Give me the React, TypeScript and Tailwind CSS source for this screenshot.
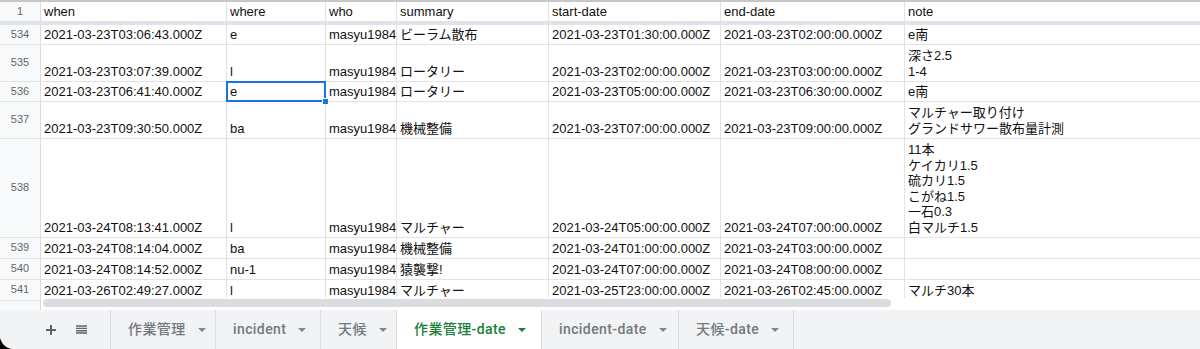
import { Fragment } from 'react';

interface Row {
  num: number;
  height: string;
  when: string;
  where: string;
  summary: string;
  start: string;
  end: string;
  note: string[];
}

const ROWS: Row[] = [
  { num: 534, height: 'h-[20px]', when: '2021-03-23T03:06:43.000Z', where: 'e', summary: 'ビーラム散布', start: '2021-03-23T01:30:00.000Z', end: '2021-03-23T02:00:00.000Z', note: ['e南'] },
  { num: 535, height: 'h-[37px]', when: '2021-03-23T03:07:39.000Z', where: 'l', summary: 'ロータリー', start: '2021-03-23T02:00:00.000Z', end: '2021-03-23T03:00:00.000Z', note: ['深さ2.5', '1-4'] },
  { num: 536, height: 'h-[20px]', when: '2021-03-23T06:41:40.000Z', where: 'e', summary: 'ロータリー', start: '2021-03-23T05:00:00.000Z', end: '2021-03-23T06:30:00.000Z', note: ['e南'] },
  { num: 537, height: 'h-[37px]', when: '2021-03-23T09:30:50.000Z', where: 'ba', summary: '機械整備', start: '2021-03-23T07:00:00.000Z', end: '2021-03-23T09:00:00.000Z', note: ['マルチャー取り付け', 'グランドサワー散布量計測'] },
  { num: 538, height: 'h-[99px]', when: '2021-03-24T08:13:41.000Z', where: 'l', summary: 'マルチャー', start: '2021-03-24T05:00:00.000Z', end: '2021-03-24T07:00:00.000Z', note: ['11本', 'ケイカリ1.5', '硫カリ1.5', 'こがね1.5', '一石0.3', '白マルチ1.5'] },
  { num: 539, height: 'h-[21px]', when: '2021-03-24T08:14:04.000Z', where: 'ba', summary: '機械整備', start: '2021-03-24T01:00:00.000Z', end: '2021-03-24T03:00:00.000Z', note: [] },
  { num: 540, height: 'h-[21px]', when: '2021-03-24T08:14:52.000Z', where: 'nu-1', summary: '猿襲撃!', start: '2021-03-24T07:00:00.000Z', end: '2021-03-24T08:00:00.000Z', note: [] },
  { num: 541, height: 'h-[21px]', when: '2021-03-26T02:49:27.000Z', where: 'l', summary: 'マルチャー', start: '2021-03-25T23:00:00.000Z', end: '2021-03-26T02:45:00.000Z', note: ['マルチ30本'] },
];

const TABS = [
  { label: '作業管理', width: 'w-[105px]' },
  { label: 'incident', width: 'w-[105px]' },
  { label: '天候', width: 'w-[76px]' },
  { label: '作業管理-date', width: 'w-[145px]', active: true },
  { label: 'incident-date', width: 'w-[137px]' },
  { label: '天候-date', width: 'w-[115px]' },
];

const cell = 'flex items-end overflow-hidden whitespace-nowrap border-r border-[#e2e3e3] px-[3px] pb-[2px]';

function Caret({ color }: { color: string }) {
  return (
    <svg width="8" height="4" viewBox="0 0 8 4" className="shrink-0">
      <path d="M0 0 L8 0 L4 4 Z" fill={color} />
    </svg>
  );
}

export default function App() {
  return (
    <div className="w-[1200px] h-[349px] bg-black">
      <div
        className="w-full h-full bg-white rounded-bl-[14px] overflow-hidden flex flex-col text-[13px] leading-[15.5px] text-[#111]"
        style={{ fontFamily: '"Liberation Sans", Arial, "Noto Sans CJK JP", sans-serif' }}
      >
        {/* grid */}
        <div className="relative h-[310px] flex flex-col border-t-2 border-[#c7c7c7]">
          {/* header row */}
          <div className="flex h-[23px] shrink-0 border-b-4 border-[#e0e3ea] bg-[#f8f9fa]">
            <div className="w-[41px] shrink-0 flex items-center justify-center border-r border-[#dadce0] text-[11px] text-[#666]">1</div>
            <div className={`w-[186px] shrink-0 ${cell} items-center pb-0 bg-white`}>when</div>
            <div className={`w-[99px] shrink-0 ${cell} items-center pb-0 bg-white`}>where</div>
            <div className={`w-[71px] shrink-0 ${cell} items-center pb-0 bg-white`}>who</div>
            <div className={`w-[152px] shrink-0 ${cell} items-center pb-0 bg-white`}>summary</div>
            <div className={`w-[172px] shrink-0 ${cell} items-center pb-0 bg-white`}>start-date</div>
            <div className={`w-[184px] shrink-0 ${cell} items-center pb-0 bg-white`}>end-date</div>
            <div className={`flex-1 ${cell} items-center pb-0 bg-white border-r-0`}>note</div>
          </div>

          {ROWS.map((r) => (
            <div key={r.num} className={`flex ${r.height} shrink-0 border-b border-[#e2e3e3]`}>
              <div className="w-[41px] shrink-0 flex items-center justify-center border-r border-[#dadce0] bg-[#f8f9fa] text-[11px] text-[#666]">
                {r.num}
              </div>
              <div className={`w-[186px] shrink-0 ${cell}`}>{r.when}</div>
              <div className="relative w-[99px] shrink-0 flex">
                <div className={`flex-1 ${cell}`}>{r.where}</div>
                {r.num === 536 && (
                  <>
                    <div className="absolute -left-[1px] right-0 -top-[1px] -bottom-[1px] border-2 border-[#1a73e8]" />
                    <div className="absolute -right-[3px] -bottom-[4px] w-[7px] h-[7px] bg-[#1a73e8] border border-white z-10" />
                  </>
                )}
              </div>
              <div className={`w-[71px] shrink-0 ${cell}`}>masyu1984@gmail.com</div>
              <div className={`w-[152px] shrink-0 ${cell}`}>{r.summary}</div>
              <div className={`w-[172px] shrink-0 ${cell}`}>{r.start}</div>
              <div className={`w-[184px] shrink-0 ${cell}`}>{r.end}</div>
              <div className={`flex-1 ${cell} border-r-0`}>
                <div className="flex flex-col">
                  {r.note.map((line, i) => (
                    <Fragment key={i}>
                      <span>{line}</span>
                    </Fragment>
                  ))}
                </div>
              </div>
            </div>
          ))}

          <div className="flex-1 flex">
            <div className="w-[41px] shrink-0 border-r border-[#dadce0] bg-[#f8f9fa]" />
          </div>

          {/* horizontal scroll track */}
          <div className="absolute left-[42px] right-0 bottom-0 h-[12px] bg-white">
            <div className="ml-[1px] mt-[1px] w-[848px] h-[8px] rounded-full bg-[#dadce0]" />
          </div>
        </div>

        {/* sheet tabs */}
        <div
          className="flex h-[39px] bg-[#f1f3f4] text-[14px] font-medium tracking-[0.4px]"
          style={{ fontFamily: 'Roboto, "Noto Sans CJK JP", sans-serif' }}
        >
          <div className="w-[110px] shrink-0 flex items-center">
            <svg width="10" height="10" viewBox="0 0 10 10" className="ml-[46px]">
              <path d="M5 0 V10 M0 5 H10" stroke="#5f6368" strokeWidth="2" />
            </svg>
            <svg width="11" height="9" viewBox="0 0 11 9" className="ml-[20px]">
              <path d="M0 1 H11 M0 3.4 H11 M0 5.7 H11 M0 8 H11" stroke="#5f6368" strokeWidth="1.4" />
            </svg>
          </div>
          {TABS.map((t) => (
            <div
              key={t.label}
              className={`${t.width} shrink-0 flex items-center gap-3 pl-[17px] border-l border-[#dadce0] ${
                t.active ? 'bg-white text-[#188038]' : 'text-[#75797d]'
              }`}
            >
              <span>{t.label}</span>
              <Caret color={t.active ? '#188038' : '#80868b'} />
            </div>
          ))}
          <div className="border-l border-[#dadce0]" />
        </div>
      </div>
    </div>
  );
}
